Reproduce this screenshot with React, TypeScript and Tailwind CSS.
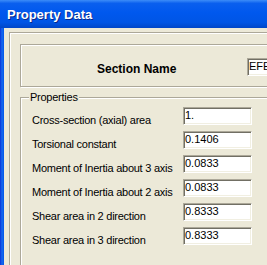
import React from 'react';

const rows: [string, string][] = [
  ['Cross-section (axial) area', '1.'],
  ['Torsional constant', '0.1406'],
  ['Moment of Inertia about 3 axis', '0.0833'],
  ['Moment of Inertia about 2 axis', '0.0833'],
  ['Shear area in 2 direction', '0.8333'],
  ['Shear area in 3 direction', '0.8333'],
];

function TextBox({ value, width = 'w-[69px]' }: { value: string; width?: string }) {
  return (
    <div
      className={`${width} h-[18px] shrink-0 bg-white border border-t-[#ACA899] border-l-[#ACA899] border-b-white border-r-white shadow-[inset_1px_1px_0_#716F64,inset_-1px_-1px_0_#F1EFE2] pl-[1px] pt-[1px] text-[11px] leading-[13px] text-black`}
    >
      {value}
    </div>
  );
}

export default function App() {
  return (
    <div className="w-[267px] h-[265px] overflow-hidden flex flex-col bg-[#ECE9D8] font-['Liberation_Sans',Arial,sans-serif]">
      {/* Title bar */}
      <div className="h-[28px] shrink-0 flex items-center pl-[7px] bg-[linear-gradient(to_bottom,#3C8CF8_0%,#0A5FEE_12%,#0058EE_45%,#0055E5_80%,#0046C8_100%)]">
        <span className="text-white font-bold text-[13px] leading-[15px] [text-shadow:1px_1px_0_#0A2A8C]">
          Property Data
        </span>
      </div>

      <div className="flex flex-1 min-h-0">
        {/* Window left border */}
        <div className="w-[4px] shrink-0 bg-[linear-gradient(to_right,#0831D9,#166AEE_50%,#0055EA)]" />

        <div className="flex-1 pt-[4px] pl-[5px]">
          <div className="w-[400px] h-[300px] border-l border-t border-[#ACA899] shadow-[inset_1px_1px_0_#fff] pt-[11px] pl-[10px]">
            {/* Section name */}
            <div className="w-[400px] h-[43px] border border-[#ACA899] shadow-[inset_1px_1px_0_#fff,1px_1px_0_#fff] flex items-start">
              <span className="w-[150px] ml-[76px] mt-[17px] shrink-0 font-bold text-[12px] leading-[14px] text-black">
                Section Name
              </span>
              <div className="mt-[13px]">
                <TextBox value="EFE" width="w-[80px]" />
              </div>
            </div>

            {/* Properties group */}
            <div className="relative mt-[10px] w-[400px] h-[200px] border border-[#ACA899] shadow-[inset_1px_1px_0_#fff,1px_1px_0_#fff] pt-[9px] pl-[11px]">
              <span className="absolute -top-[7px] left-[8px] px-[1px] bg-[#ECE9D8] text-[11px] leading-[13px] tracking-[-0.25px] text-black">
                Properties
              </span>
              <div className="flex flex-col gap-[6px]">
                {rows.map(([label, value], i) => (
                  <div key={i} className="flex items-start h-[18px]">
                    <span className="w-[151px] shrink-0 mt-[7px] text-[11px] leading-[13px] tracking-[-0.25px] text-black whitespace-nowrap">
                      {label}
                    </span>
                    <TextBox value={value} />
                  </div>
                ))}
              </div>
            </div>
          </div>
        </div>
      </div>
    </div>
  );
}
